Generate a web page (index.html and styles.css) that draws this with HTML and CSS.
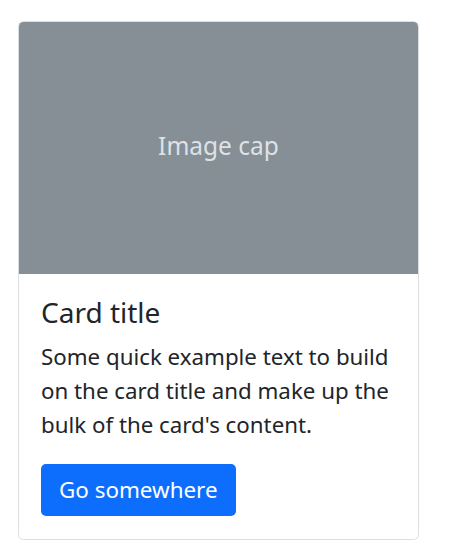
FILE: index.html
```html
<!DOCTYPE html>
<html>
<head>
<meta charset="utf-8">
<link rel="stylesheet" href="styles.css">
</head>
<body>
<div class="card">
  <div class="card-img">
    <span class="cap">Image cap</span>
  </div>
  <div class="card-body">
    <h5 class="card-title">Card title</h5>
    <p class="card-text">Some quick example text to build on the card title and make up the bulk of the card's content.</p>
    <a class="btn" href="#">Go somewhere</a>
  </div>
</div>
</body>
</html>
```

FILE: styles.css
```css
* { box-sizing: border-box; }
html, body { margin: 0; padding: 0; background: #fff; }
body {
  padding: 21px 0 0 18px;
  font-family: "Noto Sans", "Open Sans", sans-serif;
  color: #212529;
}
.card {
  width: 401px;
  border: 1px solid #dcdfe2;
  border-radius: 5.5px;
  overflow: hidden;
  background: #fff;
}
.card-img {
  height: 252px;
  background: #868e96;
  display: flex;
  align-items: center;
  justify-content: center;
}
.cap {
  color: #dee2e6;
  font-size: 24.5px;
  line-height: 1;
  margin-bottom: 4px;
}
.card-body {
  padding: 22px 22px 23px 22px;
}
.card-title {
  margin: 0 0 11px 0;
  font-size: 28px;
  font-weight: 400;
  line-height: 33px;
}
.card-text {
  margin: 0 0 23px 0;
  font-size: 22.3px;
  line-height: 33.8px;
}
.btn {
  display: inline-block;
  background: #0d6efd;
  color: #fff;
  text-decoration: none;
  font-size: 22.4px;
  line-height: 32px;
  padding: 10px 18px;
  border-radius: 5px;
}
```
